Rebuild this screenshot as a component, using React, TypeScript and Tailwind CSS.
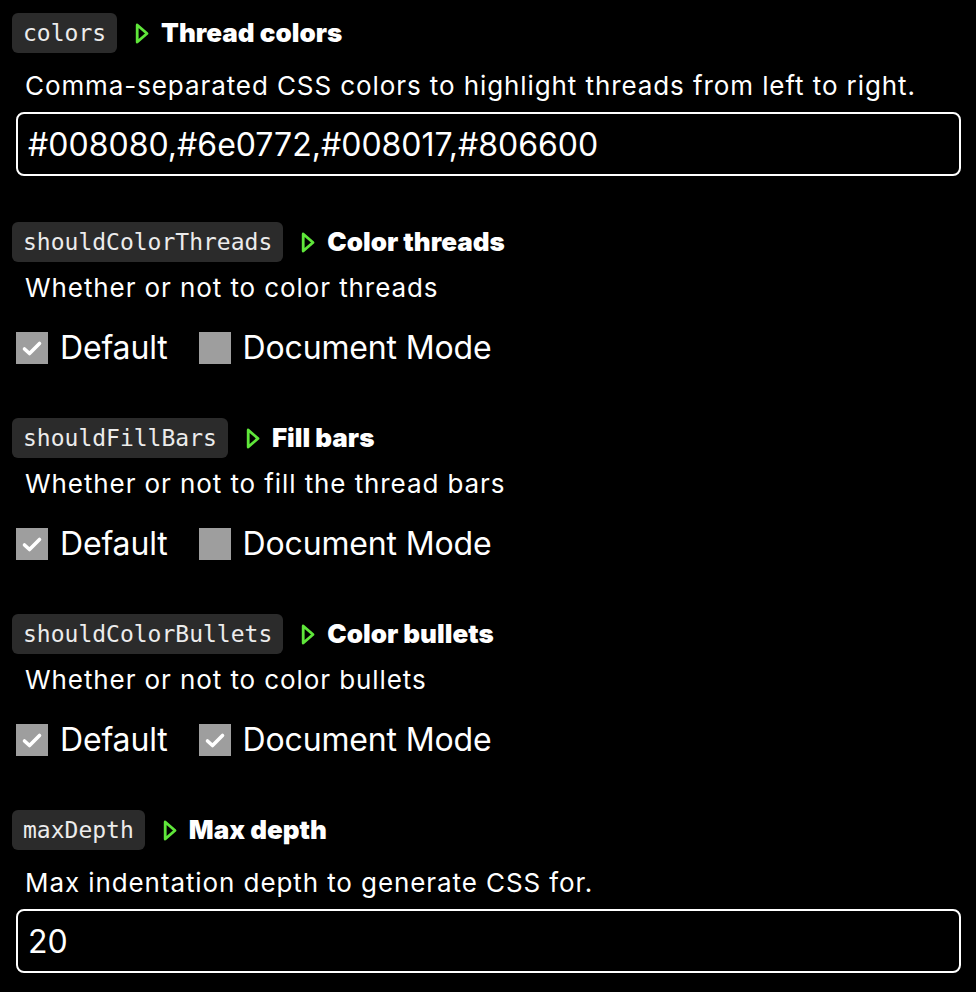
import React from "react";

type Setting = {
  key: string;
  title: string;
  description: string;
  kind: "text" | "toggle";
  value?: string;
  checks?: [boolean, boolean];
};

const SETTINGS: Setting[] = [
  {
    key: "colors",
    title: "Thread colors",
    description: "Comma-separated CSS colors to highlight threads from left to right.",
    kind: "text",
    value: "#008080,#6e0772,#008017,#806600",
  },
  {
    key: "shouldColorThreads",
    title: "Color threads",
    description: "Whether or not to color threads",
    kind: "toggle",
    checks: [true, false],
  },
  {
    key: "shouldFillBars",
    title: "Fill bars",
    description: "Whether or not to fill the thread bars",
    kind: "toggle",
    checks: [true, false],
  },
  {
    key: "shouldColorBullets",
    title: "Color bullets",
    description: "Whether or not to color bullets",
    kind: "toggle",
    checks: [true, true],
  },
  {
    key: "maxDepth",
    title: "Max depth",
    description: "Max indentation depth to generate CSS for.",
    kind: "text",
    value: "20",
  },
];

const sans = { fontFamily: "Inter, 'Noto Sans', sans-serif" };
const mono = { fontFamily: "'DejaVu Sans Mono', 'Liberation Mono', monospace" };

function Caret() {
  return (
    <svg width="14" height="21" viewBox="0 0 14 21" className="ml-[18px] shrink-0" aria-hidden="true">
      <path
        d="M2.2 2 L12 10.5 L2.2 19 Z"
        fill="none"
        stroke="#5fe63a"
        strokeWidth="2.8"
        strokeLinejoin="round"
      />
    </svg>
  );
}

function Checkbox({ checked, label, className = "" }: { checked: boolean; label: string; className?: string }) {
  return (
    <label className={`flex items-center ${className}`}>
      <span className="flex h-[32px] w-[32px] items-center justify-center bg-[#9e9e9e]">
        {checked && (
          <svg width="32" height="32" viewBox="0 0 32 32" aria-hidden="true">
            <path
              d="M8.5 17 L13.5 21.5 L23.5 11.5"
              fill="none"
              stroke="#ffffff"
              strokeWidth="3.6"
              strokeLinecap="round"
              strokeLinejoin="round"
            />
          </svg>
        )}
      </span>
      <span className="ml-[12px] text-[32px] leading-[40px] tracking-[-0.005em] text-white" style={sans}>
        {label}
      </span>
    </label>
  );
}

function SettingBlock({ s, prev }: { s: Setting; prev?: Setting }) {
  const gapTop = !prev ? "" : prev.kind === "text" ? "mt-[46px]" : "mt-[50px]";
  return (
    <section className={gapTop}>
      <div className="flex items-center">
        <code
          className="flex h-[40px] items-center rounded-[6px] bg-[#2b2b2b] px-[11px] text-[23px] text-[#ececec]"
          style={mono}
        >
          {s.key}
        </code>
        <Caret />
        <h3 className="ml-[12px] text-[26px] leading-[32px] font-black text-white" style={sans}>
          {s.title}
        </h3>
      </div>

      <p
        className={`${s.kind === "text" ? "mt-[17px]" : "mt-[10px]"} pl-[13px] text-[26px] leading-[32px] tracking-[0.035em] text-white`}
        style={sans}
      >
        {s.description}
      </p>

      {s.kind === "text" ? (
        <input
          readOnly
          value={s.value}
          className="mt-[10px] ml-[4px] block h-[64px] w-[945px] rounded-[8px] border-2 border-white bg-black px-[10px] text-[32px] text-white outline-none"
          style={sans}
        />
      ) : (
        <div className="mt-[24px] ml-[4px] flex items-center">
          <Checkbox checked={s.checks![0]} label="Default" />
          <Checkbox checked={s.checks![1]} label="Document Mode" className="ml-[31px]" />
        </div>
      )}
    </section>
  );
}

export default function App() {
  return (
    <div className="min-h-screen w-full bg-black pt-[13px] pl-[12px]" style={sans}>
      {SETTINGS.map((s, i) => (
        <SettingBlock key={s.key} s={s} prev={SETTINGS[i - 1]} />
      ))}
    </div>
  );
}
